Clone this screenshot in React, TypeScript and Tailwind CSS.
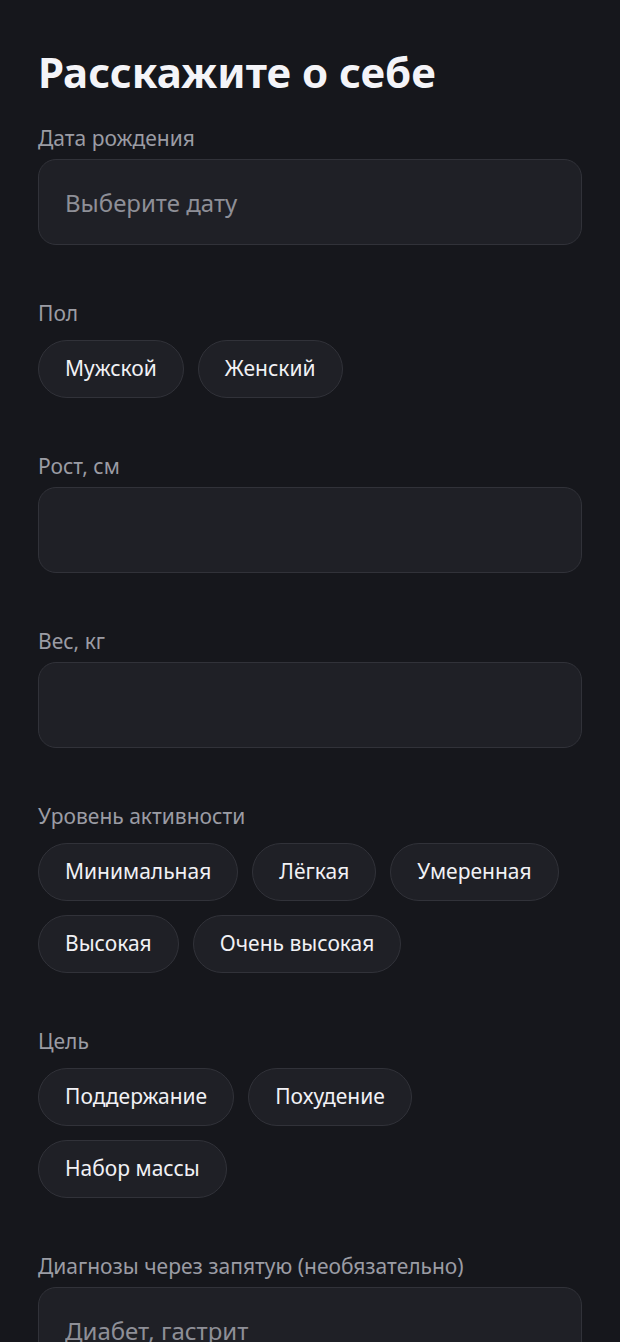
import React, { useState } from "react";

const activityLevels = ["Минимальная", "Лёгкая", "Умеренная", "Высокая", "Очень высокая"];
const goals = ["Поддержание", "Похудение", "Набор массы"];
const genders = ["Мужской", "Женский"];

function Label({ children }: { children: React.ReactNode }) {
    return <div className="text-[21px] leading-[28px] text-[#9b9ca4]">{children}</div>;
}

function TextField({ placeholder }: { placeholder?: string }) {
    return (
        <input
            placeholder={placeholder}
            className="mt-[7px] h-[86px] w-full rounded-[18px] border border-[#313239] bg-[#1f2026] px-[26px] text-[24px] text-[#f1f1f5] placeholder:text-[#8e8f97] outline-none"
        />
    );
}

function Chips({ options }: { options: string[] }) {
    const [selected, setSelected] = useState<string | null>(null);
    return (
        <div className="mt-[13px] flex flex-wrap gap-[14px]">
            {options.map((opt) => (
                <button
                    key={opt}
                    onClick={() => setSelected(opt)}
                    className={`h-[58px] rounded-full border px-[26px] text-[21px] text-[#f1f1f5] ${
                        selected === opt ? "border-[#4b4c55] bg-[#2a2b33]" : "border-[#313239] bg-[#1f2026]"
                    }`}
                >
                    {opt}
                </button>
            ))}
        </div>
    );
}

export default function App() {
    return (
        <div
            className="min-h-screen bg-[#16171c] px-[38px] pt-[44px] pb-10"
            style={{ fontFamily: '"Noto Sans", "Open Sans", sans-serif' }}
        >
            <h1 className="text-[42px] font-bold leading-[56px] text-[#f4f4f8]">Расскажите о себе</h1>

            <div className="mt-[24px] flex flex-col gap-[54px]">
                <div>
                    <Label>Дата рождения</Label>
                    <TextField placeholder="Выберите дату" />
                </div>
                <div>
                    <Label>Пол</Label>
                    <Chips options={genders} />
                </div>
                <div>
                    <Label>Рост, см</Label>
                    <TextField />
                </div>
                <div>
                    <Label>Вес, кг</Label>
                    <TextField />
                </div>
                <div>
                    <Label>Уровень активности</Label>
                    <Chips options={activityLevels} />
                </div>
                <div>
                    <Label>Цель</Label>
                    <Chips options={goals} />
                </div>
                <div>
                    <Label>Диагнозы через запятую (необязательно)</Label>
                    <TextField placeholder="Диабет, гастрит" />
                </div>
            </div>
        </div>
    );
}
